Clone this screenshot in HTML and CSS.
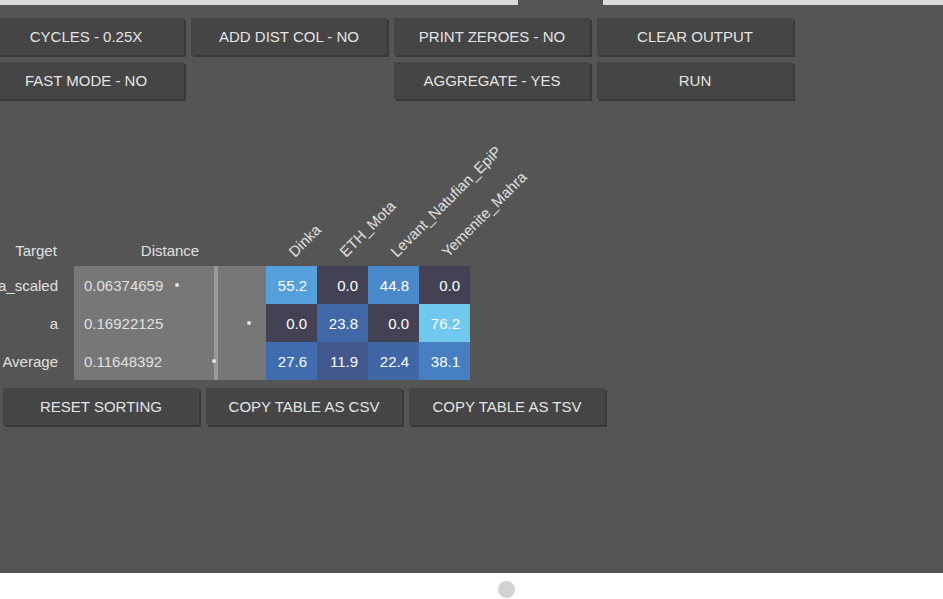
FILE: index.html
```html
<!DOCTYPE html>
<html lang="en">
<head>
  <meta charset="UTF-8" />
  <title>Distance Output</title>
  <link rel="stylesheet" href="styles.css">
</head>
<body>

  <!-- Tab strip -->
  <div class="tabstrip">
    <div class="tab"></div>
  </div>

  <div class="panel">

    <!-- Options -->
    <div class="options">
      <button class="btn">CYCLES - 0.25X</button>
      <button class="btn">ADD DIST COL - NO</button>
      <button class="btn">PRINT ZEROES - NO</button>
      <button class="btn">CLEAR OUTPUT</button>
      <button class="btn">FAST MODE - NO</button>
      <div></div>
      <button class="btn">AGGREGATE - YES</button>
      <button class="btn">RUN</button>
    </div>

    <!-- Result table -->
    <table class="result">
      <tr>
        <th class="target">Target</th>
        <th class="dist">Distance</th>
        <th class="pop"><div class="rot">Dinka</div></th>
        <th class="pop"><div class="rot">ETH_Mota</div></th>
        <th class="pop"><div class="rot">Levant_Natufian_EpiP</div></th>
        <th class="pop"><div class="rot">Yemenite_Mahra</div></th>
      </tr>
      <tr>
        <td class="target">a_scaled</td>
        <td class="dist">0.06374659<span class="avg"></span><span class="dot" style="left:101px"></span></td>
        <td class="val" style="background:#55a0da">55.2</td>
        <td class="val" style="background:#434255">0.0</td>
        <td class="val" style="background:#4a89c9">44.8</td>
        <td class="val" style="background:#434255">0.0</td>
      </tr>
      <tr>
        <td class="target">a</td>
        <td class="dist">0.16922125<span class="avg"></span><span class="dot" style="left:173px"></span></td>
        <td class="val" style="background:#434255">0.0</td>
        <td class="val" style="background:#4068a6">23.8</td>
        <td class="val" style="background:#434255">0.0</td>
        <td class="val" style="background:#71c8ee">76.2</td>
      </tr>
      <tr>
        <td class="target">Average</td>
        <td class="dist">0.11648392<span class="avg"></span><span class="dot" style="left:138px"></span></td>
        <td class="val" style="background:#3e6cae">27.6</td>
        <td class="val" style="background:#42588c">11.9</td>
        <td class="val" style="background:#4066a6">22.4</td>
        <td class="val" style="background:#467fc2">38.1</td>
      </tr>
    </table>

    <div class="table-actions">
      <button class="btn">RESET SORTING</button>
      <button class="btn">COPY TABLE AS CSV</button>
      <button class="btn">COPY TABLE AS TSV</button>
    </div>

  </div>

  <!-- Footer -->
  <div class="footer">
    <div class="knob"></div>
  </div>

</body>
</html>
```

FILE: styles.css
```css
body {
  margin: 0;
  font-family: 'Liberation Sans', Arial, sans-serif;
  background-color: #fff;
  overflow: hidden;
}

/* Tab strip */
.tabstrip {
  height: 5px;
  background-color: #dcdcdc;
}

.tab {
  margin-left: 518px;
  width: 85px;
  height: 5px;
  background-color: #555;
}

.panel {
  height: 568px;
  box-sizing: border-box;
  padding-top: 13px;
  background-color: #555;
}

/* Buttons */
.btn {
  height: 37px;
  border: none;
  padding: 0;
  background-color: #454545;
  color: #e4e4e4;
  font-family: inherit;
  font-size: 15px;
  box-shadow: 2px 2px 0 #393939;
  cursor: pointer;
}

.btn:hover {
  background-color: #4d4d4d;
}

.options {
  display: grid;
  grid-template-columns: repeat(4, 196px);
  column-gap: 7px;
  row-gap: 7px;
  margin-left: -12px;
}

/* Table */
.result {
  margin-top: 131px;
  margin-left: -10px;
  border-collapse: collapse;
  border-spacing: 0;
  color: #e0e0e0;
  font-size: 15px;
}

.result th {
  height: 36px;
  padding: 0 0 7px 0;
  vertical-align: bottom;
  font-weight: normal;
  box-sizing: border-box;
}

.result td {
  height: 38px;
  padding: 0;
  box-sizing: border-box;
}

.result th.target {
  width: 84px;
  padding-left: 8px;
  text-align: center;
}

.result td.target {
  text-align: right;
  padding-right: 16px;
  white-space: nowrap;
}

.result th.dist {
  width: 192px;
  text-align: center;
}

.result td.dist {
  position: relative;
  width: 192px;
  padding-left: 10px;
  background-color: #777;
}

.avg {
  position: absolute;
  left: 140px;
  top: 0;
  width: 4px;
  height: 100%;
  background-color: #999;
}

.dot {
  position: absolute;
  top: 17px;
  width: 4px;
  height: 4px;
  border-radius: 50%;
  background-color: #e4e4e4;
}

.result th.pop {
  width: 51px;
  text-align: left;
  padding-bottom: 6px;
}

.rot {
  width: 0;
  white-space: nowrap;
  transform: translateX(31px) rotate(-45deg);
  transform-origin: left bottom;
}

.result td.val {
  width: 51px;
  text-align: right;
  padding-right: 10px;
  color: #fff;
}

.table-actions {
  display: flex;
  gap: 7px;
  margin-top: 8px;
  margin-left: 3px;
}

.table-actions .btn {
  width: 196px;
}

/* Footer */
.footer {
  height: 26px;
  background-color: #fff;
}

.knob {
  margin-left: 498px;
  position: relative;
  top: 8px;
  width: 17px;
  height: 17px;
  border-radius: 50%;
  background-color: #d2d2d2;
}
```
